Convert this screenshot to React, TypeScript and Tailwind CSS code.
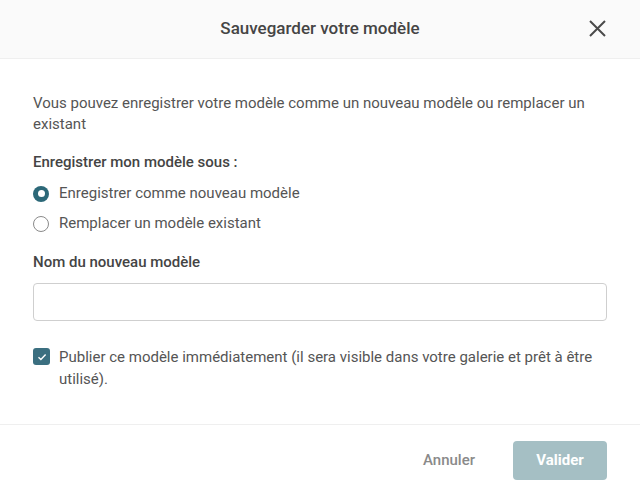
import { useState } from 'react';

/**
 * Modale « Sauvegarder votre modèle » : choix entre nouveau modèle et
 * remplacement, nom du modèle et option de publication immédiate.
 */

type Mode = 'nouveau' | 'remplacer';

const OPTIONS: { valeur: Mode; etiquette: string }[] = [
  { valeur: 'nouveau', etiquette: 'Enregistrer comme nouveau modèle' },
  { valeur: 'remplacer', etiquette: 'Remplacer un modèle existant' },
];

function Radio({ actif }: { actif: boolean }) {
  return actif ? (
    <span className="flex h-[16px] w-[16px] shrink-0 items-center justify-center rounded-full bg-[#2c6878]">
      <span className="h-[7px] w-[7px] rounded-full bg-white" />
    </span>
  ) : (
    <span className="h-[16px] w-[16px] shrink-0 rounded-full border border-[#8a8a8a] bg-white" />
  );
}

export default function App() {
  const [mode, setMode] = useState<Mode>('nouveau');
  const [nom, setNom] = useState('');
  const [publier, setPublier] = useState(true);

  return (
    <div
      className="flex h-[496px] w-[640px] flex-col bg-white text-[15px] text-[#555]"
      style={{ fontFamily: 'Roboto, "Liberation Sans", sans-serif' }}
    >
      <header className="relative flex h-[59px] shrink-0 items-center justify-center border-b border-[#efefef] bg-[#fafafa]">
        <h1 className="text-[17px] font-medium text-[#454545]">Sauvegarder votre modèle</h1>
        <button className="absolute right-[34px] top-[20px] text-[#4a4a4a]" aria-label="Fermer">
          <svg width="17" height="17" viewBox="0 0 17 17" fill="none" stroke="currentColor" strokeWidth="2">
            <path d="M1 1l15 15M16 1L1 16" />
          </svg>
        </button>
      </header>

      <main className="flex flex-1 flex-col px-[33px] pt-[34px] leading-[21px]">
        <p>Vous pouvez enregistrer votre modèle comme un nouveau modèle ou remplacer un existant</p>

        <p className="mt-[17px] font-medium text-[#444]">Enregistrer mon modèle sous :</p>
        <div className="mt-[10px] flex flex-col gap-[9px]">
          {OPTIONS.map((o) => (
            <label
              key={o.valeur}
              className="flex cursor-pointer items-center gap-[10px]"
              onClick={() => setMode(o.valeur)}
            >
              <Radio actif={mode === o.valeur} />
              <span>{o.etiquette}</span>
            </label>
          ))}
        </div>

        <p className="mt-[18px] font-medium text-[#444]">Nom du nouveau modèle</p>
        <input
          value={nom}
          onChange={(e) => setNom(e.target.value)}
          className="mt-[10px] h-[38px] w-full rounded-[4px] border border-[#cfcfcf] px-3 outline-none"
        />

        <label
          className="mt-[25px] flex cursor-pointer items-start gap-[9px]"
          onClick={() => setPublier(!publier)}
        >
          <span
            className={
              'mt-[2px] flex h-[17px] w-[17px] shrink-0 items-center justify-center rounded-[3px] ' +
              (publier ? 'bg-[#3b6f80]' : 'border border-[#8a8a8a] bg-white')
            }
          >
            {publier && (
              <svg width="10" height="10" viewBox="0 0 10 10" fill="none" stroke="white" strokeWidth="1.4">
                <path d="M1.5 5.2l2.4 2.4L8.6 2.6" />
              </svg>
            )}
          </span>
          <span className="leading-[22px]">
            Publier ce modèle immédiatement (il sera visible dans votre galerie et prêt à être utilisé).
          </span>
        </label>
      </main>

      <footer className="flex h-[72px] shrink-0 items-center justify-end gap-[38px] border-t border-[#efefef] px-[33px]">
        <button className="font-medium text-[#8a8a8a]">Annuler</button>
        <button className="h-[39px] w-[94px] rounded-[4px] bg-[#a5bfc4] font-bold text-white">Valider</button>
      </footer>
    </div>
  );
}
